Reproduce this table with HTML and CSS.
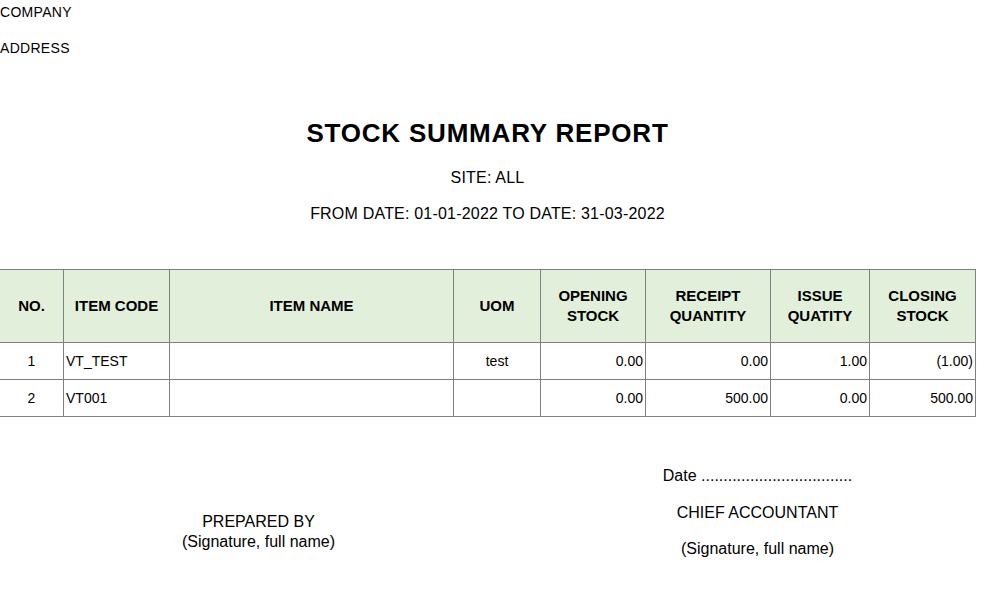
FILE: index.html
```html
<!DOCTYPE html>
<html lang="en">
  <head>
    <meta charset="UTF-8" />
    <meta name="viewport" content="width=device-width, initial-scale=1.0" />
    <title>Stock Summary Report</title>

    <link rel="stylesheet" href="styles.css">
  </head>
  <body>
    <div class="company">
      <p>COMPANY</p>
      <p>ADDRESS</p>
    </div>

    <header class="report-head">
      <h1>STOCK SUMMARY REPORT</h1>
      <p class="site">SITE: ALL</p>
      <p class="period">FROM DATE: 01-01-2022 TO DATE: 31-03-2022</p>
    </header>

    <table class="report">
      <colgroup>
        <col class="c-no" />
        <col class="c-code" />
        <col class="c-name" />
        <col class="c-uom" />
        <col class="c-open" />
        <col class="c-receipt" />
        <col class="c-issue" />
        <col class="c-close" />
      </colgroup>
      <thead>
        <tr>
          <th>NO.</th>
          <th>ITEM CODE</th>
          <th>ITEM NAME</th>
          <th>UOM</th>
          <th>OPENING<br />STOCK</th>
          <th>RECEIPT<br />QUANTITY</th>
          <th>ISSUE<br />QUATITY</th>
          <th>CLOSING<br />STOCK</th>
        </tr>
      </thead>
      <tbody>
        <tr>
          <td class="center">1</td>
          <td>VT_TEST</td>
          <td></td>
          <td class="center">test</td>
          <td class="num">0.00</td>
          <td class="num">0.00</td>
          <td class="num">1.00</td>
          <td class="num">(1.00)</td>
        </tr>
        <tr>
          <td class="center">2</td>
          <td>VT001</td>
          <td></td>
          <td class="center"></td>
          <td class="num">0.00</td>
          <td class="num">500.00</td>
          <td class="num">0.00</td>
          <td class="num">500.00</td>
        </tr>
      </tbody>
    </table>

    <footer class="signatures">
      <div class="sign sign-left">
        <p>PREPARED BY</p>
        <p>(Signature, full name)</p>
      </div>
      <div class="sign sign-right">
        <p>Date ..................................</p>
        <p>CHIEF ACCOUNTANT</p>
        <p>(Signature, full name)</p>
      </div>
    </footer>
  </body>
</html>
```

FILE: styles.css
```css
* {
  font-family: 'Liberation Sans', Arial, sans-serif;
}

body {
  margin: 0;
  color: #000;
  background: #fff;
}

p {
  margin: 0;
}

/* Company */
.company p {
  font-size: 14px;
  line-height: 24px;
  letter-spacing: 0.3px;
}
.company p + p {
  margin-top: 12px;
}

/* Report head */
.report-head {
  width: 975px;
  margin-top: 55px;
  text-align: center;
}

.report-head h1 {
  margin: 0;
  font-size: 26px;
  line-height: 36px;
  letter-spacing: 0.8px;
  font-weight: bold;
}

.report-head .site,
.report-head .period {
  font-size: 16px;
  line-height: 24px;
  letter-spacing: 0.2px;
}
.report-head .site {
  margin-top: 15px;
}
.report-head .period {
  margin-top: 12px;
}

/* Table */
.report {
  margin-top: 43px;
  margin-left: -1px;
  width: 977px;
  table-layout: fixed;
  border-collapse: collapse;
}

.c-no { width: 64px; }
.c-code { width: 106px; }
.c-name { width: 284px; }
.c-uom { width: 87px; }
.c-open { width: 105px; }
.c-receipt { width: 125px; }
.c-issue { width: 99px; }
.c-close { width: 106px; }

.report th,
.report td {
  border: 1px solid #808080;
  padding: 0 2px;
}

.report th {
  height: 72px;
  background: #e2efda;
  font-size: 15px;
  font-weight: bold;
  line-height: 20px;
  text-align: center;
  vertical-align: middle;
}

.report td {
  height: 36px;
  font-size: 14px;
  text-align: left;
  vertical-align: middle;
}

.report td.center {
  text-align: center;
}
.report td.num {
  text-align: right;
}

/* Signatures */
.signatures {
  display: grid;
  grid-template-columns: 517px 435px;
  column-gap: 23px;
  align-items: start;
  margin-top: 47px;
  font-size: 16px;
  text-align: center;
}

.sign-left {
  padding-top: 48px;
}
.sign-left p {
  line-height: 20px;
}

.sign-right p {
  line-height: 24px;
}
.sign-right p + p {
  margin-top: 12.5px;
}
```
